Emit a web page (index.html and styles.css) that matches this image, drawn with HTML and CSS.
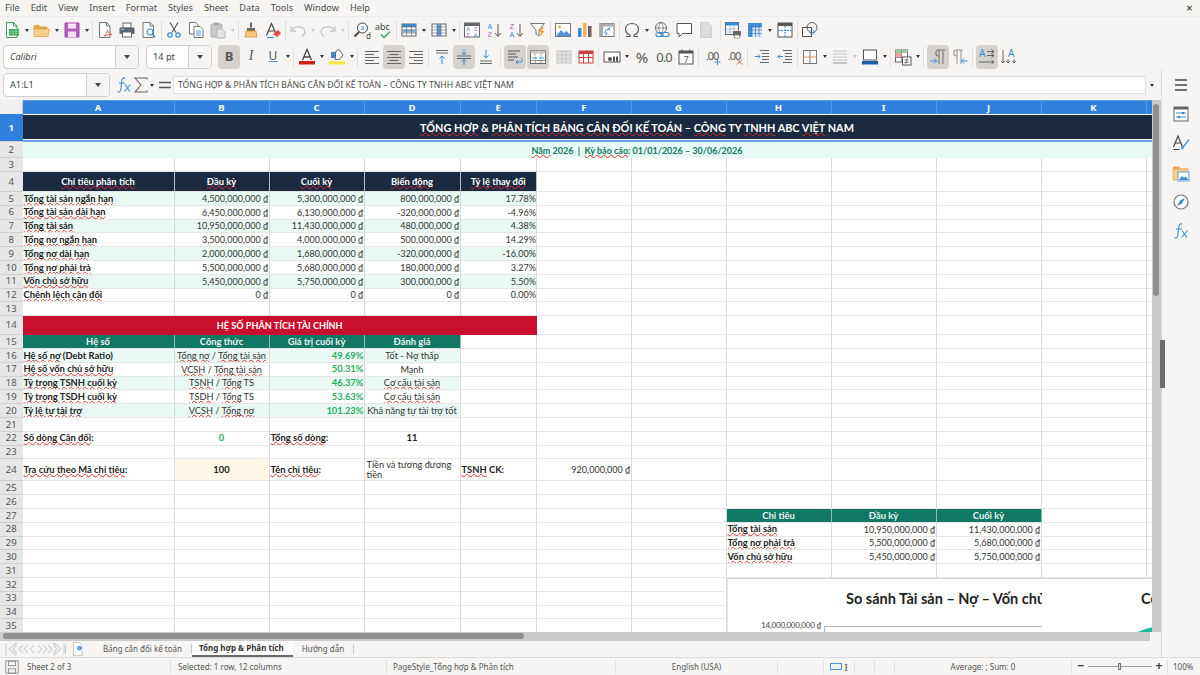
FILE: index.html
```html
<!DOCTYPE html>
<html lang="vi">
<head>
<meta charset="utf-8">
<title>Tổng hợp &amp; Phân tích</title>
<link rel="stylesheet" href="styles.css">
</head>
<body>
<svg class="sprite" xmlns="http://www.w3.org/2000/svg">
<symbol id="i-new" viewBox="0 0 18 18"><path d="M3.5 1.5h7l3.5 3.5v11.5H3.500z" fill="#fff" stroke="#3f9b52"/><path d="M10.500 1.500V5H14" fill="none" stroke="#3f9b52"/><rect x="6" y="8" width="10" height="6.500" fill="#2f9e4f"/><path d="M6 10.200h10M6 12.300h10M10 8v6.500M13 8v6.500" stroke="#bfe6c8" stroke-width=".6"/></symbol>
<symbol id="i-open" viewBox="0 0 18 18"><path d="M1 4.500h5l1.500 1.500H14v2H1z" fill="#e9a94f" stroke="#d9953a" stroke-width=".7"/><path d="M1 8h15.500L15 15.500H1z" fill="#f8d08c" stroke="#e0a24a" stroke-width=".8"/></symbol>
<symbol id="i-save" viewBox="0 0 18 18"><path d="M2 2h14v14H2z" fill="#b85cc0" stroke="#a24aab"/><rect x="5" y="2.500" width="8" height="5" fill="#f6e4f8"/><rect x="5" y="10.500" width="8" height="5.500" fill="#f6e4f8"/></symbol>
<symbol id="i-pdf" viewBox="0 0 18 18"><path d="M3.500 1.500h7l3.500 3.500v11.500H3.500z" fill="#fff" stroke="#777"/><path d="M10.500 1.500V5H14" fill="none" stroke="#777"/><path d="M8 15c2-1 3-4 3.500-6 .5 2 2 4 4.500 4.500-2 0-5 .5-8 1.500z" fill="none" stroke="#d9534f" stroke-width=".9"/></symbol>
<symbol id="i-print" viewBox="0 0 18 18"><rect x="5" y="2" width="8" height="5" fill="#fff" stroke="#666"/><rect x="1.500" y="6.500" width="15" height="6.500" rx="1" fill="#5c6670"/><rect x="4.500" y="11" width="9" height="5" fill="#fff" stroke="#666"/><path d="M3 8.500h3" stroke="#8fc0ea"/></symbol>
<symbol id="i-prev" viewBox="0 0 18 18"><path d="M3 1.500h7l3.500 3.500v11.500H3z" fill="#fff" stroke="#777"/><path d="M10 1.500V5h3.500" fill="none" stroke="#777"/><circle cx="10" cy="11" r="3" fill="#fff" stroke="#3b8ad8" stroke-width="1.200"/><path d="M12.200 13.200l3 3" stroke="#3b8ad8" stroke-width="1.500"/></symbol>
<symbol id="i-cut" viewBox="0 0 18 18"><path d="M5 1.500l6 10M13 1.500l-6 10" stroke="#555" stroke-width="1.100" fill="none"/><circle cx="5" cy="14" r="2.200" fill="none" stroke="#3b8ad8" stroke-width="1.200"/><circle cx="13" cy="14" r="2.200" fill="none" stroke="#3b8ad8" stroke-width="1.200"/></symbol>
<symbol id="i-copy" viewBox="0 0 18 18"><path d="M2.500 1.500h6l2.500 2.500v9H2.500z" fill="#fff" stroke="#777"/><path d="M7 5.500h6l3 3v8H7z" fill="#fff" stroke="#777"/><path d="M9 10h5M9 12h5M9 14h5" stroke="#3b8ad8" stroke-width=".9"/></symbol>
<symbol id="i-paste" viewBox="0 0 18 18"><rect x="2" y="3" width="11" height="13" rx="1" fill="#c9c9c9" stroke="#b5b5b5"/><rect x="5" y="1.500" width="5" height="3" fill="#aaa"/><path d="M8 8h5l3 3v6H8z" fill="#e6e6e6" stroke="#b5b5b5"/></symbol>
<symbol id="i-clone" viewBox="0 0 18 18"><path d="M8 1.500h2v5H8z" fill="#666"/><path d="M5 7h8v3H5z" fill="#666"/><path d="M4 10h10l1 6H3z" fill="#f3c77d" stroke="#d9953a" stroke-width=".8"/></symbol>
<symbol id="i-clear" viewBox="0 0 18 18"><path d="M2.500 14.500L7.500 2.500 12 13M4.500 10h6" fill="none" stroke="#444" stroke-width="1.200"/><path d="M9 13l5-4 3 3-4 4z" fill="#e34a4a"/><path d="M3 16.500h7" stroke="#3b8ad8"/></symbol>
<symbol id="i-undo" viewBox="0 0 18 18"><path d="M2 5v5h5M2.500 9.500C5 5.500 12 4.500 15 8c2 3 .5 6-2 7.500" fill="none" stroke="#c6c6c6" stroke-width="1.300"/></symbol>
<symbol id="i-redo" viewBox="0 0 18 18"><path d="M16 5v5h-5M15.500 9.500C13 5.500 6 4.500 3 8c-2 3-.5 6 2 7.500" fill="none" stroke="#c6c6c6" stroke-width="1.300"/></symbol>
<symbol id="i-find" viewBox="0 0 18 18"><circle cx="9.500" cy="7" r="5" fill="#fff" stroke="#444"/><path d="M6 11l-4.500 4.500" stroke="#444" stroke-width="1.800"/><text x="9.500" y="9.300" font-size="7" font-family="Noto Sans" fill="#3b8ad8" text-anchor="middle">a</text><text x="13" y="17.500" font-size="8" font-family="Noto Sans" fill="#444">d</text></symbol>
<symbol id="i-spell" viewBox="0 0 18 18"><text x="0" y="9" font-size="9" font-family="Noto Sans" fill="#444">abc</text><path d="M6 13.500l3 3 6-6" fill="none" stroke="#3fa45b" stroke-width="1.400"/></symbol>
<symbol id="i-rows" viewBox="0 0 18 18"><rect x="2" y="3" width="14" height="12" fill="#fff" stroke="#666"/><rect x="2" y="3" width="14" height="3" fill="#3b8ad8"/><rect x="2" y="8.500" width="14" height="3" fill="#7fb6ea"/><path d="M2 6h14M2 9h14M2 12h14M6.500 3v12M11.500 3v12" stroke="#666" stroke-width=".6"/></symbol>
<symbol id="i-cols" viewBox="0 0 18 18"><rect x="2" y="3" width="14" height="12" fill="#fff" stroke="#666"/><rect x="7" y="3" width="4" height="12" fill="#5a9fe0"/><path d="M2 6h14M2 9h14M2 12h14M7 3v12M11 3v12" stroke="#666" stroke-width=".6"/></symbol>
<symbol id="i-sort" viewBox="0 0 18 18"><rect x="1.500" y="2" width="15" height="14" fill="#fff" stroke="#666"/><rect x="1.500" y="2" width="15" height="3" fill="#666"/><text x="5" y="10" font-size="5.500" font-family="Noto Sans" fill="#3b8ad8" text-anchor="middle">A</text><text x="5" y="15.500" font-size="5.500" font-family="Noto Sans" fill="#c05ac8" text-anchor="middle">Z</text><text x="12.500" y="10" font-size="5.500" font-family="Noto Sans" fill="#c05ac8" text-anchor="middle">Z</text><text x="12.500" y="15.500" font-size="5.500" font-family="Noto Sans" fill="#3b8ad8" text-anchor="middle">A</text></symbol>
<symbol id="i-asc" viewBox="0 0 18 18"><text x="5" y="8" font-size="7.500" font-family="Noto Sans" fill="#3b8ad8" text-anchor="middle">A</text><text x="5" y="16" font-size="7.500" font-family="Noto Sans" fill="#c05ac8" text-anchor="middle">Z</text><path d="M13 3v12M10 12l3 3.500 3-3.500" fill="none" stroke="#555"/></symbol>
<symbol id="i-desc" viewBox="0 0 18 18"><text x="5" y="8" font-size="7.500" font-family="Noto Sans" fill="#c05ac8" text-anchor="middle">Z</text><text x="5" y="16" font-size="7.500" font-family="Noto Sans" fill="#3b8ad8" text-anchor="middle">A</text><path d="M13 3v12M10 12l3 3.500 3-3.500" fill="none" stroke="#555"/></symbol>
<symbol id="i-filter" viewBox="0 0 18 18"><path d="M1.500 2.500h14l-5.500 6.500v6l-3-2V9z" fill="#fff" stroke="#777"/><path d="M12 6l-2.500 5H12l-1 5 4.500-6H13l2-4z" fill="#f0a63c"/></symbol>
<symbol id="i-img" viewBox="0 0 18 18"><rect x="1.500" y="2.500" width="15" height="13" fill="#fff" stroke="#777"/><circle cx="5.500" cy="6" r="1.500" fill="#f0b35a"/><path d="M2 15l5-6 3 3 2.500-2 4 4v1z" fill="#4b95dc"/></symbol>
<symbol id="i-chart" viewBox="0 0 18 18"><rect x="2" y="7" width="3.500" height="9" fill="#3b8ad8"/><rect x="7" y="2" width="3.500" height="14" fill="#f0b35a"/><rect x="12" y="5" width="3.500" height="11" fill="#666"/></symbol>
<symbol id="i-pivot" viewBox="0 0 18 18"><rect x="2" y="2.500" width="14" height="13" fill="#fff" stroke="#777"/><rect x="2" y="2.500" width="14" height="3" fill="#aaa"/><rect x="2" y="2.500" width="3" height="13" fill="#aaa"/><path d="M7 12c0-3 2-4 5-4M12 6l-1.500 2 2 1.500M7 14l2-1-1-2" fill="none" stroke="#3b8ad8"/></symbol>
<symbol id="i-omega" viewBox="0 0 18 18"><path d="M3 15.500h4v-1.500C4.500 13 2.500 10.500 2.500 8c0-3.500 3-5.500 6.500-5.500s6.500 2 6.500 5.500c0 2.500-2 5-4.500 6v1.500h4" fill="none" stroke="#555" stroke-width="1.200"/></symbol>
<symbol id="i-link" viewBox="0 0 18 18"><circle cx="8" cy="7" r="5.500" fill="#fff" stroke="#666"/><path d="M2.500 7h11M8 1.500c-3 3-3 8 0 11M8 1.500c3 3 3 8 0 11" fill="none" stroke="#666" stroke-width=".7"/><rect x="3" y="11.500" width="7" height="4" rx="2" fill="none" stroke="#3b8ad8" stroke-width="1.100"/><rect x="8" y="11.500" width="8" height="4" rx="2" fill="none" stroke="#3b8ad8" stroke-width="1.100"/></symbol>
<symbol id="i-note" viewBox="0 0 18 18"><path d="M2 2.500h14.500v10H7.500l-3.500 3.500v-3.500H2z" fill="#fff" stroke="#555"/></symbol>
<symbol id="i-hdr" viewBox="0 0 18 18"><path d="M3.500 1.500h7.500l3.500 3.500v11.500h-11z" fill="#dcdcdc" stroke="#cfcfcf"/></symbol>
<symbol id="i-parea" viewBox="0 0 18 18"><rect x="1.500" y="1.500" width="13" height="12" fill="#fff" stroke="#666"/><rect x="1.500" y="1.500" width="13" height="3" fill="#3b8ad8"/><path d="M1.500 8h13M1.500 11h13M6 4.500v9M10 4.500v9" stroke="#7a9cc0" stroke-width=".6"/><rect x="9" y="10" width="8" height="5" rx="1" fill="#666"/><rect x="10.500" y="14" width="5" height="3" fill="#fff" stroke="#666" stroke-width=".6"/></symbol>
<symbol id="i-freeze" viewBox="0 0 18 18"><rect x="2" y="2" width="14" height="14" fill="#4b95dc"/><rect x="6" y="6" width="10" height="10" fill="#d8e8f7"/><path d="M2 6h14M2 9h14M2 12.500h14M6 2v14M9.500 2v14M13 2v14" stroke="#2d6cab" stroke-width=".6"/></symbol>
<symbol id="i-split" viewBox="0 0 18 18"><rect x="2" y="2" width="14" height="14" fill="#fff" stroke="#555"/><rect x="2" y="2" width="14" height="3" fill="#555"/><path d="M2 9.500h14M9 5v11" stroke="#3b8ad8" stroke-dasharray="2 1"/></symbol>
<symbol id="i-shapes" viewBox="0 0 18 18"><rect x="1.500" y="6.500" width="9" height="9" fill="#fff" stroke="#555"/><circle cx="11" cy="6.500" r="5" fill="none" stroke="#555"/><path d="M8 11l3-3 3 3-3 3z" fill="none" stroke="#3b8ad8" stroke-width=".6"/></symbol>
<symbol id="i-fcolor" viewBox="0 0 18 18"><path d="M4.500 12L9 1.500 13.500 12M6 9h6" fill="none" stroke="#444" stroke-width="1.300"/><rect x="1" y="13" width="16" height="3.500" fill="#c9211e"/></symbol>
<symbol id="i-hl" viewBox="0 0 18 18"><path d="M3 4h6v6H3z" fill="#3b8ad8"/><path d="M8 3l3-1.500 4 5.500-3.500 4.500H7z" fill="#fff" stroke="#555" stroke-width=".9"/><rect x="1" y="13" width="16" height="3.500" fill="#ffe94d"/></symbol>
<symbol id="i-al" viewBox="0 0 18 18"><path d="M2 3.500h14M2 6.500h9M2 9.500h14M2 12.500h9M2 15.500h14" stroke="#666"/></symbol>
<symbol id="i-ac" viewBox="0 0 18 18"><path d="M2 3.500h14M4.500 6.500h9M2 9.500h14M4.500 12.500h9M2 15.500h14" stroke="#666"/></symbol>
<symbol id="i-ar" viewBox="0 0 18 18"><path d="M2 3.500h14M7 6.500h9M2 9.500h14M7 12.500h9M2 15.500h14" stroke="#666"/></symbol>
<symbol id="i-vt" viewBox="0 0 18 18"><path d="M3 2.500h12M3 5h12" stroke="#666"/><path d="M9 16V8M6.500 10.500L9 8l2.500 2.500" fill="none" stroke="#3b8ad8"/></symbol>
<symbol id="i-vc" viewBox="0 0 18 18"><path d="M2 8h14M2 10.500h14" stroke="#666"/><path d="M9 1.500V7M6.500 4.500L9 7l2.500-2.500M9 17v-5.500M6.500 14L9 11.500l2.500 2.500" fill="none" stroke="#3b8ad8"/></symbol>
<symbol id="i-vb" viewBox="0 0 18 18"><path d="M3 13h12M3 15.500h12" stroke="#666"/><path d="M9 2v8M6.500 7.500L9 10l2.500-2.500" fill="none" stroke="#3b8ad8"/></symbol>
<symbol id="i-wrap" viewBox="0 0 18 18"><path d="M2 3h12M2 6h8M2 9h10M2 12h6" stroke="#555"/><path d="M9 13h4c3 0 3-3 1-4M11 15l-2-2 2-2" fill="none" stroke="#3b8ad8" transform="translate(1,1)"/></symbol>
<symbol id="i-merge" viewBox="0 0 18 18"><rect x="1.500" y="2.500" width="15" height="13" fill="#fff" stroke="#666"/><rect x="1.500" y="2.500" width="15" height="3" fill="#c9c5c1"/><path d="M1.500 12.500h15M6 5.500v2M12 5.500v2M6 12.500v3M12 12.500v3" stroke="#666" stroke-width=".7"/><path d="M3 10h4.500M6 8.500L7.500 10 6 11.500M15 10h-4.500M12 8.500L10.500 10l1.500 1.500" fill="none" stroke="#3b8ad8" stroke-width=".9"/></symbol>
<symbol id="i-gridc" viewBox="0 0 18 18"><rect x="2" y="3" width="14" height="12" fill="#e2e2e2" stroke="#c4c4c4"/><path d="M2 7h14M2 11h14M7 3v12M11 3v12" stroke="#c4c4c4"/></symbol>
<symbol id="i-redgrid" viewBox="0 0 18 18"><rect x="2" y="3" width="14" height="12" fill="#fff" stroke="#c9413e"/><rect x="2" y="3" width="14" height="3" fill="#c9413e"/><path d="M2 9.500h14M6.500 6v9M11.500 6v9" stroke="#c9413e"/></symbol>
<symbol id="i-cur" viewBox="0 0 18 18"><rect x="1" y="4" width="16" height="10" fill="#fff" stroke="#555"/><circle cx="7" cy="11" r="2" fill="#555"/><rect x="10" y="8.500" width="2" height="5" fill="#555"/><rect x="13" y="8.500" width="2" height="5" fill="#555"/></symbol>
<symbol id="i-num" viewBox="0 0 18 18"><text x="9" y="14" font-size="13" letter-spacing="-1" font-family="Noto Sans" fill="#555" text-anchor="middle">0.0</text></symbol>
<symbol id="i-date" viewBox="0 0 18 18"><rect x="2" y="3" width="14" height="13" fill="#fff" stroke="#555"/><rect x="2" y="3" width="14" height="2.500" fill="#555"/><path d="M5 1.500v3M13 1.500v3" stroke="#555"/><text x="9" y="14.500" font-size="9" font-family="Noto Sans" fill="#555" text-anchor="middle">7</text></symbol>
<symbol id="i-adddec" viewBox="0 0 18 18"><text x="8" y="12" font-size="11" letter-spacing="-1" font-family="Noto Sans" fill="#555" text-anchor="middle">.00</text><path d="M13.500 11v6M10.500 14h6" stroke="#3b8ad8"/></symbol>
<symbol id="i-deldec" viewBox="0 0 18 18"><text x="8" y="12" font-size="11" letter-spacing="-1" font-family="Noto Sans" fill="#555" text-anchor="middle">.00</text><path d="M11 11.500l5 5M16 11.500l-5 5" stroke="#d9534f"/></symbol>
<symbol id="i-ind" viewBox="0 0 18 18"><path d="M7 2.500h9M9 5.500h7M9 8.500h7M9 11.500h7M7 14.500h9" stroke="#666"/><path d="M2 8.500h5M5 6.500l2 2-2 2" fill="none" stroke="#3b8ad8"/></symbol>
<symbol id="i-outd" viewBox="0 0 18 18"><path d="M7 2.500h9M9 5.500h7M9 8.500h7M9 11.500h7M7 14.500h9" stroke="#666"/><path d="M7 8.500H2M4 6.500l-2 2 2 2" fill="none" stroke="#3b8ad8"/></symbol>
<symbol id="i-bord" viewBox="0 0 18 18"><rect x="2.500" y="2.500" width="13" height="13" fill="#fff" stroke="#777"/><path d="M9 2.500v13" stroke="#777"/><path d="M2.500 9h13" stroke="#e0955a"/></symbol>
<symbol id="i-bstyle" viewBox="0 0 18 18"><path d="M2 3h14M2 6h14M2 9h14M2 12h14" stroke="#c4c4c4"/><path d="M2 15h14" stroke="#c4c4c4" stroke-width="2"/></symbol>
<symbol id="i-bcol" viewBox="0 0 18 18"><rect x="2.500" y="2" width="13" height="10" fill="#fff" stroke="#555"/><rect x="1" y="13" width="16" height="3.500" fill="#1c5fa8"/></symbol>
<symbol id="i-cond" viewBox="0 0 18 18"><rect x="1.500" y="2" width="12" height="12" fill="#fff" stroke="#666"/><rect x="1.500" y="2" width="12" height="3" fill="#9bd19f"/><rect x="1.500" y="5" width="6" height="4.500" fill="#f2a3a0"/><path d="M1.500 9.500h12M7.500 2v12" stroke="#666" stroke-width=".6"/><rect x="8.500" y="9" width="8.500" height="8" fill="#fff" stroke="#555"/><path d="M10.500 12h4M10.500 14.500h4M13.500 10.500l-2 5" stroke="#555" stroke-width=".8"/></symbol>
<symbol id="i-ltr" viewBox="0 0 18 18"><path d="M10 16V2M14 16V2M16.500 2H9.500C6 2 6 8 9.500 8H10" fill="none" stroke="#777" stroke-width="1.100"/><path d="M1.500 13h6M5 10.500L7.500 13 5 15.500" fill="none" stroke="#3b8ad8"/></symbol>
<symbol id="i-rtl" viewBox="0 0 18 18"><path d="M6 16V2M10 16V2M12 2H5.500C2 2 2 8 5.500 8H6" fill="none" stroke="#999" stroke-width="1.100"/><path d="M16.500 13h-6M13 10.500L10.500 13l2.500 2.500" fill="none" stroke="#3b8ad8"/></symbol>
<symbol id="i-htext" viewBox="0 0 18 18"><text x="1" y="9" font-size="10" font-family="Noto Sans" fill="#3b8ad8">A</text><path d="M9 3.500h7M13.500 1.500l2.500 2-2.500 2M9 7.500h7M13.500 5.500l2.500 2-2.500 2M1 14h15M13.500 12l2.500 2-2.500 2" fill="none" stroke="#555" stroke-width=".9"/></symbol>
<symbol id="i-vtext" viewBox="0 0 18 18"><text x="8" y="9" font-size="10" font-family="Noto Sans" fill="#3b8ad8">A</text><path d="M3 2v13M1 13l2 2 2-2M8 11v4M6 13l2 2 2-2M14 11v4M12 13l2 2 2-2" fill="none" stroke="#555" stroke-width=".9"/></symbol>
<symbol id="i-fx" viewBox="0 0 18 18"><path d="M10 2C7.500 1.500 7 3.500 6.800 5.500L5.800 13c-.3 2.500-1.500 3.500-3.300 2.800M4 7h6" fill="none" stroke="#3b8ad8" stroke-width="1.100"/><path d="M10 8.500l5 7M15.500 8.500l-6 7" fill="none" stroke="#3b8ad8" stroke-width="1.100"/></symbol>
<symbol id="i-sum" viewBox="0 0 18 18"><path d="M15 3.500V2H3l6 7-6 7h12v-1.500" fill="none" stroke="#666" stroke-width="1.100"/></symbol>
<symbol id="i-eq" viewBox="0 0 18 18"><path d="M3 6.500h12M3 11.500h12" stroke="#555" stroke-width="1.500"/></symbol>
<symbol id="i-ham" viewBox="0 0 18 18"><path d="M3 4h12M3 9h12M3 14h12" stroke="#444" stroke-width="1.400"/></symbol>
<symbol id="i-prop" viewBox="0 0 18 18"><rect x="2" y="2" width="14" height="14" fill="#fff" stroke="#666"/><rect x="2" y="2" width="14" height="2.500" fill="#666"/><path d="M4 8h10M4 12h10" stroke="#3b8ad8"/><circle cx="11" cy="8" r="1.200" fill="#3b8ad8"/><circle cx="7" cy="12" r="1.200" fill="#3b8ad8"/></symbol>
<symbol id="i-styles" viewBox="0 0 18 18"><path d="M1.500 13L6 2l4.500 11M3.200 9h5.500" fill="none" stroke="#444" stroke-width="1.200"/><path d="M1.500 15.500h6" stroke="#444"/><path d="M9 15c0-2 1-3 2.500-3.500L16.500 5l1 1-5 6.500C12 14.500 10.500 15.500 9 15z" fill="#4b95dc"/></symbol>
<symbol id="i-gal" viewBox="0 0 18 18"><path d="M1 2.500h6l1.500 2H16v3H1z" fill="#e9a94f"/><path d="M1 5h15v11H1z" fill="#f8d08c" stroke="#e0a24a" stroke-width=".7"/><rect x="6" y="8" width="11" height="9" fill="#fff" stroke="#3b8ad8" stroke-width=".8"/><path d="M7 16l3-4 2 2 2-1.500 2.500 3.500z" fill="#3b8ad8"/></symbol>
<symbol id="i-nav" viewBox="0 0 18 18"><circle cx="9" cy="9" r="7" fill="#fff" stroke="#777" stroke-width="1.200"/><path d="M13 5L10 10.500 5 13l3-5.500z" fill="#3b8ad8"/></symbol>
<symbol id="i-disk" viewBox="0 0 18 18"><path d="M2 2h14v14H2z" fill="none" stroke="#8a8a8a"/><rect x="5" y="2.500" width="8" height="5" fill="none" stroke="#8a8a8a"/><rect x="5" y="11" width="8" height="5" fill="none" stroke="#8a8a8a"/></symbol>
<symbol id="i-tabnew" viewBox="0 0 18 18"><path d="M4 1.500h6l3.500 3.500v11.500H4z" fill="#fff" stroke="#bbb"/><circle cx="10.500" cy="8" r="2.500" fill="#3b8ad8"/><circle cx="10.500" cy="8" r=".8" fill="#fff"/></symbol>
<symbol id="i-nav-tabs" viewBox="0 0 60 14"><g fill="none" stroke="#cfcfcf" stroke-width="1.100"><path d="M1 1v12M11 1L4 7l7 6v-3L8 7l3-3z"/><path d="M18 3L14 7l4 4M23 3l-4 4 4 4M29 3l-4 4 4 4"/><path d="M33 3l4 4-4 4M38 3l4 4-4 4M43 3l4 4-4 4"/><path d="M49 1l7 6-7 6v-3l3-3-3-3zM59 1v12"/></g></symbol>
</svg>

<header class="menubar">
<span>File</span><span>Edit</span><span>View</span><span>Insert</span><span>Format</span><span>Styles</span><span>Sheet</span><span>Data</span><span>Tools</span><span>Window</span><span>Help</span>
<span class="close">✕</span>
</header>

<div class="toolbar tb1">
<span class="ib"><svg><use href="#i-new"/></svg></span><span class="car"></span>
<span class="ib"><svg><use href="#i-open"/></svg></span><span class="car"></span>
<span class="ib"><svg><use href="#i-save"/></svg></span><span class="car"></span><span class="sep"></span>
<span class="ib"><svg><use href="#i-pdf"/></svg></span>
<span class="ib"><svg><use href="#i-print"/></svg></span>
<span class="ib"><svg><use href="#i-prev"/></svg></span><span class="sep"></span>
<span class="ib"><svg><use href="#i-cut"/></svg></span>
<span class="ib"><svg><use href="#i-copy"/></svg></span>
<span class="ib"><svg><use href="#i-paste"/></svg></span><span class="car off"></span><span class="sep"></span>
<span class="ib"><svg><use href="#i-clone"/></svg></span>
<span class="ib"><svg><use href="#i-clear"/></svg></span><span class="sep"></span>
<span class="ib"><svg><use href="#i-undo"/></svg></span><span class="car off"></span>
<span class="ib"><svg><use href="#i-redo"/></svg></span><span class="car off"></span><span class="sep"></span>
<span class="ib m1"><svg><use href="#i-find"/></svg></span>
<span class="ib"><svg><use href="#i-spell"/></svg></span><span class="sep"></span>
<span class="ib"><svg><use href="#i-rows"/></svg></span><span class="car"></span>
<span class="ib"><svg><use href="#i-cols"/></svg></span><span class="car"></span><span class="sep"></span>
<span class="ib"><svg><use href="#i-sort"/></svg></span>
<span class="ib"><svg><use href="#i-asc"/></svg></span>
<span class="ib"><svg><use href="#i-desc"/></svg></span>
<span class="ib"><svg><use href="#i-filter"/></svg></span><span class="sep"></span>
<span class="ib"><svg><use href="#i-img"/></svg></span>
<span class="ib"><svg><use href="#i-chart"/></svg></span>
<span class="ib"><svg><use href="#i-pivot"/></svg></span><span class="sep"></span>
<span class="ib"><svg><use href="#i-omega"/></svg></span><span class="car"></span>
<span class="ib"><svg><use href="#i-link"/></svg></span>
<span class="ib"><svg><use href="#i-note"/></svg></span>
<span class="ib"><svg><use href="#i-hdr"/></svg></span><span class="sep m2"></span>
<span class="ib"><svg><use href="#i-parea"/></svg></span>
<span class="ib"><svg><use href="#i-freeze"/></svg></span><span class="car"></span>
<span class="ib"><svg><use href="#i-split"/></svg></span><span class="sep"></span>
<span class="ib"><svg><use href="#i-shapes"/></svg></span>
</div>

<div class="toolbar tb2">
<span class="combo font"><span class="val it">Calibri</span><span class="arr"></span></span>
<span class="combo size"><span class="val">14 pt</span><span class="arr"></span></span>
<span class="ib on txt bold">B</span>
<span class="ib txt it serif">I</span>
<span class="ib txt und">U</span><span class="car"></span><span class="sep"></span>
<span class="ib m1"><svg><use href="#i-fcolor"/></svg></span><span class="car"></span>
<span class="ib"><svg><use href="#i-hl"/></svg></span><span class="car"></span><span class="sep"></span>
<span class="ib m2"><svg><use href="#i-al"/></svg></span>
<span class="ib on"><svg><use href="#i-ac"/></svg></span>
<span class="ib"><svg><use href="#i-ar"/></svg></span><span class="sep"></span>
<span class="ib m1"><svg><use href="#i-vt"/></svg></span>
<span class="ib on"><svg><use href="#i-vc"/></svg></span>
<span class="ib"><svg><use href="#i-vb"/></svg></span><span class="sep m2"></span>
<span class="ib on m2"><svg><use href="#i-wrap"/></svg></span>
<span class="ib on m1"><svg><use href="#i-merge"/></svg></span>
<span class="ib m4"><svg><use href="#i-gridc"/></svg></span>
<span class="ib"><svg><use href="#i-redgrid"/></svg></span><span class="sep"></span>
<span class="ib m1"><svg><use href="#i-cur"/></svg></span><span class="car"></span>
<span class="ib txt pct">%</span>
<span class="ib"><svg><use href="#i-num"/></svg></span>
<span class="ib"><svg><use href="#i-date"/></svg></span><span class="sep"></span>
<span class="ib m2"><svg><use href="#i-adddec"/></svg></span>
<span class="ib"><svg><use href="#i-deldec"/></svg></span><span class="sep"></span>
<span class="ib m2"><svg><use href="#i-ind"/></svg></span>
<span class="ib m1"><svg><use href="#i-outd"/></svg></span><span class="sep"></span>
<span class="ib"><svg><use href="#i-bord"/></svg></span><span class="car"></span>
<span class="ib"><svg><use href="#i-bstyle"/></svg></span><span class="car off"></span>
<span class="ib"><svg><use href="#i-bcol"/></svg></span><span class="car"></span><span class="sep"></span>
<span class="ib"><svg><use href="#i-cond"/></svg></span><span class="car"></span><span class="sep"></span>
<span class="ib on m2"><svg><use href="#i-ltr"/></svg></span>
<span class="ib"><svg><use href="#i-rtl"/></svg></span><span class="sep"></span>
<span class="ib on m2"><svg><use href="#i-htext"/></svg></span>
<span class="ib"><svg><use href="#i-vtext"/></svg></span>
</div>

<div class="middle">
<main class="workarea">
<div class="formula">
<span class="combo name"><span class="val">A1:L1</span><span class="arr"></span></span>
<span class="ib fxb"><svg><use href="#i-fx"/></svg></span>
<span class="ib sumb"><svg><use href="#i-sum"/></svg></span><span class="car"></span>
<span class="ib eqb"><svg><use href="#i-eq"/></svg></span>
<span class="input">TỔNG HỢP &amp; PHÂN TÍCH BẢNG CÂN ĐỐI KẾ TOÁN – CÔNG TY TNHH ABC VIỆT NAM</span>
<span class="car fcar"></span>
</div>

<div class="sheet">
<div class="gridwrap">
<div class="grid">
<div class="r"><div class="corner"></div><div class="ch">A</div><div class="ch">B</div><div class="ch">C</div><div class="ch">D</div><div class="ch">E</div><div class="ch">F</div><div class="ch">G</div><div class="ch">H</div><div class="ch">I</div><div class="ch">J</div><div class="ch">K</div><div class="ch"></div></div>
<div class="r"><div class="rh sel">1</div><div class="c title s12"><span><span class="sp">TỔNG HỢP</span> &amp; <span class="sp">PHÂN TÍCH BẢNG CÂN ĐỐI KẾ TOÁN</span> – <span class="sp">CÔNG</span> TY <span class="sp">TNHH</span> ABC <span class="sp">VIỆT</span> NAM</span></div></div>
<div class="r"><div class="rh">2</div><div class="c subtitle s12"><span><span class="sp">Năm</span> 2026 &nbsp;|&nbsp; <span class="sp">Kỳ báo cáo</span>: 01/01/2026 – 30/06/2026</span></div></div>
<div class="r"><div class="rh">3</div><div class="c"></div><div class="c"></div><div class="c"></div><div class="c"></div><div class="c"></div><div class="c"></div><div class="c"></div><div class="c"></div><div class="c"></div><div class="c"></div><div class="c"></div><div class="c"></div></div>
<div class="r"><div class="rh">4</div><div class="c hd"><span class="sp">Chỉ tiêu phân tích</span></div><div class="c hd"><span class="sp">Đầu kỳ</span></div><div class="c hd"><span class="sp">Cuối kỳ</span></div><div class="c hd"><span class="sp">Biến động</span></div><div class="c hd"><span class="sp">Tỷ lệ thay đổi</span></div><div class="c"></div><div class="c"></div><div class="c"></div><div class="c"></div><div class="c"></div><div class="c"></div><div class="c"></div></div>
<div class="r"><div class="rh">5</div><div class="c b m"><span class="sp">Tổng tài sản ngắn hạn</span></div><div class="c n m">4,500,000,000 ₫</div><div class="c n m">5,300,000,000 ₫</div><div class="c n m">800,000,000 ₫</div><div class="c n m">17.78%</div><div class="c"></div><div class="c"></div><div class="c"></div><div class="c"></div><div class="c"></div><div class="c"></div><div class="c"></div></div>
<div class="r"><div class="rh">6</div><div class="c b"><span class="sp">Tổng tài sản dài hạn</span></div><div class="c n">6,450,000,000 ₫</div><div class="c n">6,130,000,000 ₫</div><div class="c n">-320,000,000 ₫</div><div class="c n">-4.96%</div><div class="c"></div><div class="c"></div><div class="c"></div><div class="c"></div><div class="c"></div><div class="c"></div><div class="c"></div></div>
<div class="r"><div class="rh">7</div><div class="c b m"><span class="sp">Tổng tài sản</span></div><div class="c n m">10,950,000,000 ₫</div><div class="c n m">11,430,000,000 ₫</div><div class="c n m">480,000,000 ₫</div><div class="c n m">4.38%</div><div class="c"></div><div class="c"></div><div class="c"></div><div class="c"></div><div class="c"></div><div class="c"></div><div class="c"></div></div>
<div class="r"><div class="rh">8</div><div class="c b"><span class="sp">Tổng nợ ngắn hạn</span></div><div class="c n">3,500,000,000 ₫</div><div class="c n">4,000,000,000 ₫</div><div class="c n">500,000,000 ₫</div><div class="c n">14.29%</div><div class="c"></div><div class="c"></div><div class="c"></div><div class="c"></div><div class="c"></div><div class="c"></div><div class="c"></div></div>
<div class="r"><div class="rh">9</div><div class="c b m"><span class="sp">Tổng nợ dài hạn</span></div><div class="c n m">2,000,000,000 ₫</div><div class="c n m">1,680,000,000 ₫</div><div class="c n m">-320,000,000 ₫</div><div class="c n m">-16.00%</div><div class="c"></div><div class="c"></div><div class="c"></div><div class="c"></div><div class="c"></div><div class="c"></div><div class="c"></div></div>
<div class="r"><div class="rh">10</div><div class="c b"><span class="sp">Tổng nợ phải trả</span></div><div class="c n">5,500,000,000 ₫</div><div class="c n">5,680,000,000 ₫</div><div class="c n">180,000,000 ₫</div><div class="c n">3.27%</div><div class="c"></div><div class="c"></div><div class="c"></div><div class="c"></div><div class="c"></div><div class="c"></div><div class="c"></div></div>
<div class="r"><div class="rh">11</div><div class="c b m"><span class="sp">Vốn chủ sở hữu</span></div><div class="c n m">5,450,000,000 ₫</div><div class="c n m">5,750,000,000 ₫</div><div class="c n m">300,000,000 ₫</div><div class="c n m">5.50%</div><div class="c"></div><div class="c"></div><div class="c"></div><div class="c"></div><div class="c"></div><div class="c"></div><div class="c"></div></div>
<div class="r"><div class="rh">12</div><div class="c b"><span class="sp">Chênh lệch cân đối</span></div><div class="c n">0 ₫</div><div class="c n">0 ₫</div><div class="c n">0 ₫</div><div class="c n">0.00%</div><div class="c"></div><div class="c"></div><div class="c"></div><div class="c"></div><div class="c"></div><div class="c"></div><div class="c"></div></div>
<div class="r"><div class="rh">13</div><div class="c"></div><div class="c"></div><div class="c"></div><div class="c"></div><div class="c"></div><div class="c"></div><div class="c"></div><div class="c"></div><div class="c"></div><div class="c"></div><div class="c"></div><div class="c"></div></div>
<div class="r"><div class="rh">14</div><div class="c crimson s5">HỆ SỐ PHÂN TÍCH TÀI CHÍNH</div><div class="c"></div><div class="c"></div><div class="c"></div><div class="c"></div><div class="c"></div><div class="c"></div><div class="c"></div></div>
<div class="r"><div class="rh">15</div><div class="c teal">Hệ số</div><div class="c teal">Công thức</div><div class="c teal">Giá trị cuối kỳ</div><div class="c teal">Đánh giá</div><div class="c"></div><div class="c"></div><div class="c"></div><div class="c"></div><div class="c"></div><div class="c"></div><div class="c"></div><div class="c"></div></div>
<div class="r"><div class="rh">16</div><div class="c b m"><span><span class="sp">Hệ số nợ</span> (Debt Ratio)</span></div><div class="c ctr m"><span><span class="sp">Tổng nợ</span> / <span class="sp">Tổng tài sản</span></span></div><div class="c n m gr">49.69%</div><div class="c ctr m">Tốt - Nợ thấp</div><div class="c"></div><div class="c"></div><div class="c"></div><div class="c"></div><div class="c"></div><div class="c"></div><div class="c"></div><div class="c"></div></div>
<div class="r"><div class="rh">17</div><div class="c b"><span class="sp">Hệ số vốn chủ sở hữu</span></div><div class="c ctr"><span><span class="sp">VCSH</span> / <span class="sp">Tổng tài sản</span></span></div><div class="c n gr">50.31%</div><div class="c ctr">Mạnh</div><div class="c"></div><div class="c"></div><div class="c"></div><div class="c"></div><div class="c"></div><div class="c"></div><div class="c"></div><div class="c"></div></div>
<div class="r"><div class="rh">18</div><div class="c b m"><span class="sp">Tỷ trọng TSNH cuối kỳ</span></div><div class="c ctr m"><span><span class="sp">TSNH</span> / <span class="sp">Tổng</span> TS</span></div><div class="c n m gr">46.37%</div><div class="c ctr m"><span class="sp">Cơ cấu tài sản</span></div><div class="c"></div><div class="c"></div><div class="c"></div><div class="c"></div><div class="c"></div><div class="c"></div><div class="c"></div><div class="c"></div></div>
<div class="r"><div class="rh">19</div><div class="c b"><span class="sp">Tỷ trọng TSDH cuối kỳ</span></div><div class="c ctr"><span><span class="sp">TSDH</span> / <span class="sp">Tổng</span> TS</span></div><div class="c n gr">53.63%</div><div class="c ctr"><span class="sp">Cơ cấu tài sản</span></div><div class="c"></div><div class="c"></div><div class="c"></div><div class="c"></div><div class="c"></div><div class="c"></div><div class="c"></div><div class="c"></div></div>
<div class="r"><div class="rh">20</div><div class="c b m"><span class="sp">Tỷ lệ tự tài trợ</span></div><div class="c ctr m"><span><span class="sp">VCSH</span> / <span class="sp">Tổng nợ</span></span></div><div class="c n m gr">101.23%</div><div class="c ctr m">Khả năng tự tài trợ tốt</div><div class="c"></div><div class="c"></div><div class="c"></div><div class="c"></div><div class="c"></div><div class="c"></div><div class="c"></div><div class="c"></div></div>
<div class="r"><div class="rh">21</div><div class="c"></div><div class="c"></div><div class="c"></div><div class="c"></div><div class="c"></div><div class="c"></div><div class="c"></div><div class="c"></div><div class="c"></div><div class="c"></div><div class="c"></div><div class="c"></div></div>
<div class="r"><div class="rh">22</div><div class="c b"><span><span class="sp">Số dòng Cân đối</span>:</span></div><div class="c ctr b gr">0</div><div class="c b"><span><span class="sp">Tổng số dòng</span>:</span></div><div class="c ctr b">11</div><div class="c"></div><div class="c"></div><div class="c"></div><div class="c"></div><div class="c"></div><div class="c"></div><div class="c"></div><div class="c"></div></div>
<div class="r"><div class="rh">23</div><div class="c"></div><div class="c"></div><div class="c"></div><div class="c"></div><div class="c"></div><div class="c"></div><div class="c"></div><div class="c"></div><div class="c"></div><div class="c"></div><div class="c"></div><div class="c"></div></div>
<div class="r"><div class="rh">24</div><div class="c b"><span><span class="sp">Tra cứu theo Mã chỉ tiêu</span>:</span></div><div class="c ctr b input-cell">100</div><div class="c b"><span><span class="sp">Tên chỉ tiêu</span>:</span></div><div class="c wrap">Tiền và tương đương tiền</div><div class="c b"><span><span class="sp">TSNH</span> CK:</span></div><div class="c n">920,000,000 ₫</div><div class="c"></div><div class="c"></div><div class="c"></div><div class="c"></div><div class="c"></div><div class="c"></div></div>
<div class="r"><div class="rh">25</div><div class="c"></div><div class="c"></div><div class="c"></div><div class="c"></div><div class="c"></div><div class="c"></div><div class="c"></div><div class="c"></div><div class="c"></div><div class="c"></div><div class="c"></div><div class="c"></div></div>
<div class="r"><div class="rh">26</div><div class="c"></div><div class="c"></div><div class="c"></div><div class="c"></div><div class="c"></div><div class="c"></div><div class="c"></div><div class="c"></div><div class="c"></div><div class="c"></div><div class="c"></div><div class="c"></div></div>
<div class="r"><div class="rh">27</div><div class="c"></div><div class="c"></div><div class="c"></div><div class="c"></div><div class="c"></div><div class="c"></div><div class="c"></div><div class="c teal">Chỉ tiêu</div><div class="c teal">Đầu kỳ</div><div class="c teal">Cuối kỳ</div><div class="c"></div><div class="c"></div></div>
<div class="r"><div class="rh">28</div><div class="c"></div><div class="c"></div><div class="c"></div><div class="c"></div><div class="c"></div><div class="c"></div><div class="c"></div><div class="c b"><span class="sp">Tổng tài sản</span></div><div class="c n">10,950,000,000 ₫</div><div class="c n">11,430,000,000 ₫</div><div class="c"></div><div class="c"></div></div>
<div class="r"><div class="rh">29</div><div class="c"></div><div class="c"></div><div class="c"></div><div class="c"></div><div class="c"></div><div class="c"></div><div class="c"></div><div class="c b"><span class="sp">Tổng nợ phải trả</span></div><div class="c n">5,500,000,000 ₫</div><div class="c n">5,680,000,000 ₫</div><div class="c"></div><div class="c"></div></div>
<div class="r"><div class="rh">30</div><div class="c"></div><div class="c"></div><div class="c"></div><div class="c"></div><div class="c"></div><div class="c"></div><div class="c"></div><div class="c b"><span class="sp">Vốn chủ sở hữu</span></div><div class="c n">5,450,000,000 ₫</div><div class="c n">5,750,000,000 ₫</div><div class="c"></div><div class="c"></div></div>
<div class="r"><div class="rh">31</div><div class="c"></div><div class="c"></div><div class="c"></div><div class="c"></div><div class="c"></div><div class="c"></div><div class="c"></div><div class="c"></div><div class="c"></div><div class="c"></div><div class="c"></div><div class="c"></div></div>
<div class="r"><div class="rh">32</div><div class="c"></div><div class="c"></div><div class="c"></div><div class="c"></div><div class="c"></div><div class="c"></div><div class="c"></div><div class="c"></div><div class="c"></div><div class="c"></div><div class="c"></div><div class="c"></div></div>
<div class="r"><div class="rh">33</div><div class="c"></div><div class="c"></div><div class="c"></div><div class="c"></div><div class="c"></div><div class="c"></div><div class="c"></div><div class="c"></div><div class="c"></div><div class="c"></div><div class="c"></div><div class="c"></div></div>
<div class="r"><div class="rh">34</div><div class="c"></div><div class="c"></div><div class="c"></div><div class="c"></div><div class="c"></div><div class="c"></div><div class="c"></div><div class="c"></div><div class="c"></div><div class="c"></div><div class="c"></div><div class="c"></div></div>
<div class="r"><div class="rh">35</div><div class="c"></div><div class="c"></div><div class="c"></div><div class="c"></div><div class="c"></div><div class="c"></div><div class="c"></div><div class="c"></div><div class="c"></div><div class="c"></div><div class="c"></div><div class="c"></div></div>
</div>
<div class="chart one">
<div class="chart-title">So sánh Tài sản – Nợ – Vốn chủ sở hữu</div>
<div class="axis"><span class="tick">14,000,000,000 ₫</span><span class="plot"></span></div>
</div>
<div class="chart two">
<div class="chart-title second">Cơ cấu</div>
<div class="pie"></div>
</div>
</div>
<div class="vscroll"><span class="vthumb"></span></div>
</div>

<div class="hscroll"><span class="hthumb"></span></div>

<div class="tabs">
<svg class="tabnav"><use href="#i-nav-tabs"/></svg>
<span class="tabsep"></span>
<svg class="tabnew"><use href="#i-tabnew"/></svg>
<span class="tab first">Bảng cân đối kế toán</span>
<span class="tabsep"></span>
<span class="tab cur">Tổng hợp &amp; Phân tích</span>
<span class="tab">Hướng dẫn</span>
<span class="tabsep"></span>
</div>
</main>
<span class="grip"></span>
<aside class="sidebar">
<svg><use href="#i-ham"/></svg>
<svg><use href="#i-prop"/></svg>
<svg><use href="#i-styles"/></svg>
<svg><use href="#i-gal"/></svg>
<svg><use href="#i-nav"/></svg>
<svg><use href="#i-fx"/></svg>
</aside>
</div>

<footer class="status">
<span class="st s-sheet"><svg><use href="#i-disk"/></svg>Sheet 2 of 3</span>
<span class="st s-sel">Selected: 1 row, 12 columns</span>
<span class="st s-page">PageStyle_Tổng hợp &amp; Phân tích</span>
<span class="st s-lang">English (USA)</span>
<span class="st s-blank"></span>
<span class="st s-mode"><span class="selbox"></span><span class="ibeam">I</span></span>
<span class="st s-a"></span>
<span class="st s-a"></span>
<span class="st s-calc">Average: ; Sum: 0</span>
<span class="st s-zoom"><span class="zb">−</span><span class="slider"><span class="knob"></span></span><span class="zb">+</span></span>
<span class="st s-pct">100%</span>
</footer>
</body>
</html>
```

FILE: styles.css
```css
* { box-sizing: border-box; }
html, body { margin: 0; padding: 0; }
body {
  width: 1200px; height: 675px; overflow: hidden;
  display: flex; flex-direction: column;
  background: #f6f5f4; color: #454545;
  font: 9.5px/1.2 "Noto Sans", sans-serif;
}
.sprite { display: none; }

.menubar {
  height: 17px; display: flex; align-items: center; gap: 11px;
  padding: 0 0 0 5px; border-bottom: 1px solid #ececea;
  color: #4c4c4c; flex: none; font-size: 9.2px;
}
.close { margin-left: auto; margin-right: 7px; font-size: 8px; font-weight: 700; }

.toolbar { display: flex; align-items: center; flex: none; padding-left: 1px; }
.tb1 { height: 26px; }
.tb2 { height: 27px; padding-left: 3px; }

.ib {
  width: 22px; height: 24px; flex: none;
  display: inline-flex; align-items: center; justify-content: center;
  border-radius: 4px;
}
.ib svg { width: 18px; height: 18px; flex: none; }
.on { background: #d5d2ce; }
.car { width: 8px; flex: none; display: inline-flex; justify-content: center; align-items: center; }
.car::after {
  content: ""; border: 2.5px solid transparent; border-top: 3px solid #333; border-bottom: 0;
}
.car.off::after { border-top-color: #c8c8c8; }
.sep { width: 3px; height: 20px; flex: none; }
.sep::after { content: ""; display: block; width: 1px; height: 100%; margin-left: 1px; background: #e2e0de; }
.m1 { margin-left: 1px; }
.m2 { margin-left: 2px; }
.m4 { margin-left: 4px; }

.txt { font-size: 14px; color: #555; }
.bold { font-weight: 700; font-size: 13px; }
.it { font-style: italic; }
.serif { font-family: "Liberation Serif", serif; font-size: 14px; }
.und { font-size: 12px; text-decoration: underline; text-decoration-color: #4b95dc; }
.pct { font-size: 15px; }

.combo {
  display: flex; height: 24px; flex: none;
  background: #fff; border: 1px solid #d3cfcb; border-radius: 4px; overflow: hidden;
}
.val { flex: 1; display: flex; align-items: center; padding-left: 6px; font-size: 9.2px; }
.arr {
  width: 23px; background: #f5f4f3; border-left: 1px solid #d3cfcb;
  display: flex; align-items: center; justify-content: center;
}
.arr::after { content: ""; border: 3.5px solid transparent; border-top: 4px solid #444; border-bottom: 0; }
.font { width: 136px; }
.size { width: 66px; margin: 0 6px 0 7px; }

.middle { flex: 1; display: flex; min-height: 0; position: relative; }
.workarea { width: 1161px; display: flex; flex-direction: column; flex: none; }
.formula { height: 30px; display: flex; align-items: center; padding-left: 3px; flex: none; }
.name { width: 107px; margin-right: 3px; }
.fxb { width: 22px; }
.sumb { width: 14px; margin-left: -1px; }
.eqb { width: 16px; margin-left: 1px; }
.input {
  width: 973px; height: 18px; padding: 0 4px;
  background: #fff; border: 1px solid #e0dedc; display: flex; align-items: center;
  font-size: 8.650px; color: #4a4a4a; white-space: nowrap;
}
.fcar { width: 12px; }

.sheet { height: 532px; display: flex; flex: none; }
.gridwrap { width: 1152px; height: 532px; overflow: hidden; position: relative; background: #fff; flex: none; }
.grid {
  display: grid;
  width: 1251.500px;
  grid-template-columns: 22.500px 152px 95px 95px 96px 76.500px 94.500px 95px 105px 105px 105px 105px 105px;
  grid-template-rows: 14px 28px 16px 14px 20px repeat(9, 13.800px) 19px repeat(9, 13.800px) 22px repeat(11, 13.800px);
  font: 9.200px/1 "Lato", sans-serif;
  color: #333;
}
.r { display: contents; }
.corner { background: #f0efee; border-right: 1px solid #ccc; }
.ch {
  background: #2f7fdc; color: #fff; font-weight: 700; font-size: 9.5px;
  display: flex; align-items: center; justify-content: center;
  border-right: 1px solid #5a98e2; border-top: 1px solid #5f9de4;
  font-family: "Noto Sans", sans-serif;
}
.rh {
  background: #e6e6e6; color: #555; font-family: "Noto Sans", sans-serif; font-size: 9.500px;
  display: flex; align-items: center; justify-content: center;
  border-bottom: 1px solid #cfcfcf;
}
.rh.sel { background: #2f7fdc; color: #fff; font-weight: 700; }
.c {
  min-width: 0; display: flex; align-items: center; padding: 0 1px;
  border-right: 1px solid #dadada; border-bottom: 1px solid #e6e6e6;
  white-space: nowrap; overflow: hidden; background: #fff;
}
.s12 { grid-column: span 12; justify-content: center; }
.s5 { grid-column: span 5; justify-content: center; }
.title {
  background: #1b2a41; color: #fff; font-weight: 700; font-size: 10.900px;
  border: 0; box-shadow: inset 0 1px #fff, inset 0 -2px #6aa3de, inset 0 -3px #fff;
}
.subtitle { background: #e8faf6; color: #117864; font-weight: 700; border: 0; font-size: 9px; }
.hd { background: #1b2a41; color: #fff; font-weight: 700; font-size: 9.400px; justify-content: center; border-right: 1px solid #b9bfc8; }
.crimson { background: #c8102e; color: #fff; font-weight: 700; font-size: 9.100px; border: 0; }
.teal { background: #117864; color: #e8f5f1; font-weight: 700; font-size: 9.400px; justify-content: center; border-right: 1px solid #8dbfb4; }
.b { font-weight: 700; font-size: 9.400px; color: #222; }
.m { background: #ebf9f5; }
.n { justify-content: flex-end; padding-right: 0; font-size: 9.050px; }
.ctr { justify-content: center; }
.gr { color: #27ae60; font-weight: 700; font-size: 9.400px; }
.wrap { white-space: normal; line-height: 1.1; padding-left: 2px; }
.input-cell { background: #fef9e7; }
.sp {
  text-decoration: underline wavy #d92b2b;
  text-decoration-thickness: 1px; text-underline-offset: 0;
  text-decoration-skip-ink: none;
}

.chart { position: absolute; top: 478px; background: #fff; border-top: 1px solid #cfcfcf; height: 60px; overflow: hidden; }
.one { left: 727px; width: 315px; border-left: 1px solid #e6e6e6; }
.two { left: 1042px; width: 110px; }
.chart-title {
  position: absolute; left: 118px; top: 13px; white-space: nowrap;
  font: 700 14.500px/1 "Lato", sans-serif; color: #222;
}
.second { left: 99px; }
.axis { position: absolute; left: 33px; top: 39px; display: flex; align-items: flex-start; white-space: nowrap; }
.tick { font: 8px/1 "Lato", sans-serif; color: #444; letter-spacing: -.2px; margin-top: 3px; }
.plot { display: block; width: 230px; height: 30px; margin: 8px 0 0 3px; border: 1px solid #b5b5b5; border-right: 0; flex: none; }
.pie {
  position: absolute; left: 58px; top: 47px; width: 130px; height: 130px; border-radius: 50%;
  background: #1abc9c;
}

.vscroll { width: 9px; height: 532px; background: #cbcbcb; padding: 4px 1px 0; flex: none; }
.vthumb { display: block; width: 6px; height: 192px; background: #8f8f8f; border-radius: 3px; }
.hscroll { height: 9px; width: 1150px; background: #cbcbcb; padding: 1px 3px; flex: none; }
.hthumb { display: block; width: 521px; height: 6px; background: #8f8f8f; border-radius: 3px; }

.tabs { height: 16px; display: flex; align-items: center; flex: none; padding-left: 5px; color: #555; font-size: 8px; }
.tabnav { width: 60px; height: 14px; flex: none; }
.tabsep { width: 1px; height: 10px; background: #c8c8c8; flex: none; }
.tabnew { width: 16px; height: 16px; margin-left: 4px; flex: none; }
.tab { padding: 0 9px; height: 16px; display: flex; align-items: center; white-space: nowrap; }
.first { margin-left: 8px; padding: 0 9px 0 9px; }
.cur { background: #fff; font-weight: 700; color: #333; border-bottom: 2px solid #6b6b6b; padding: 0 9px 0 7px; }

.grip { position: absolute; left: 1160px; top: 270px; width: 5px; height: 48px; background: #6c6c6c; z-index: 2; }
.sidebar {
  width: 39px; border-left: 1px solid #dcdad8; flex: 1;
  display: flex; flex-direction: column; align-items: center; padding-top: 6px; gap: 11.200px;
}
.sidebar svg { width: 18px; height: 18px; flex: none; }

.status {
  height: 18px; flex: none; display: flex; align-items: center;
  border-top: 1px solid #dcdad8; font-size: 8px; color: #555;
}
.st { height: 13px; display: flex; align-items: center; border-right: 1px solid #e2e0de; white-space: nowrap; flex: none; }
.s-sheet { width: 171px; padding-left: 4px; gap: 7px; }
.s-sheet svg { width: 16px; height: 16px; }
.s-sel { width: 216px; padding-left: 7px; }
.s-page { width: 229px; padding-left: 6px; }
.s-lang { width: 162px; justify-content: center; }
.s-blank { width: 46px; }
.s-mode { width: 31px; justify-content: center; gap: 2px; }
.selbox { width: 12px; height: 7px; border: 1px solid #4b95dc; background: #eaf3fb; }
.ibeam { font: 11px "Liberation Serif", serif; }
.s-a { width: 20px; }
.s-calc { width: 177px; justify-content: center; }
.s-zoom { width: 96px; padding-left: 5px; gap: 3px; }
.zb { font-size: 12px; font-weight: 700; color: #444; width: 8px; text-align: center; }
.slider { width: 64px; height: 1px; background: #999; position: relative; display: block; }
.knob { position: absolute; left: 30px; top: -3px; width: 3px; height: 7px; background: #ddd; border: 1px solid #777; }
.s-pct { border: 0; padding-left: 5px; }
```
